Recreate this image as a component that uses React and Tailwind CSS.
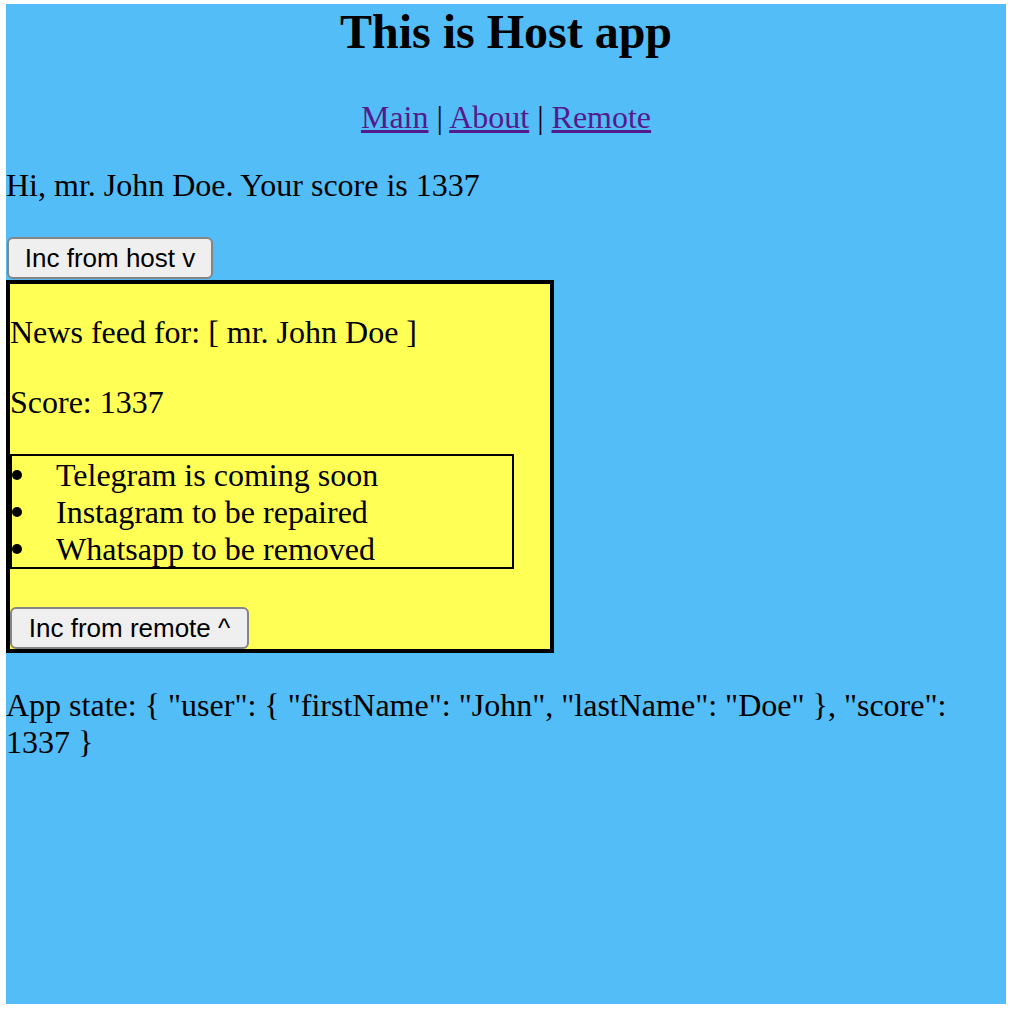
import React from 'react';

// host page mock — sizes are the 2x screenshot pixels
const serif = "font-['Liberation_Serif',_'Times_New_Roman',_serif]";
const btn =
  "h-[42px] rounded-[6px] border-2 border-[#858585] bg-[#efefef] text-[26px] text-black font-['Liberation_Sans',_Arial,_sans-serif] leading-none";

const news = ['Telegram is coming soon', 'Instagram to be repaired', 'Whatsapp to be removed'];

const state = { user: { firstName: 'John', lastName: 'Doe' }, score: 1337 };
const stateText = JSON.stringify(state, null, 1).replace(/\n\s*/g, ' ');

const NewsFeed = () => (
  <div className="w-[548px] border-4 border-black bg-[#ffff55]">
    <p className="mt-[30px] leading-[37px]">News feed for: [ mr. John Doe ]</p>
    <p className="mt-[33px] leading-[37px]">Score: 1337</p>
    <ul className="mt-[33px] w-[504px] border-2 border-black">
      {news.map((item) => (
        <li key={item} className="flex items-center h-[37px]">
          <span className="w-[10px] h-[10px] rounded-full bg-black inline-block" />
          <span className="ml-[34px]">{item}</span>
        </li>
      ))}
    </ul>
    <div className="mt-[38px] h-[42px] flex items-start">
      <button className={`${btn} w-[239px]`}>Inc from remote ^</button>
    </div>
  </div>
);

export default function App() {
  return (
    <div className={`mt-[4px] ml-[6px] w-[1000px] h-[1000px] bg-[#53bdf8] text-black text-[32px] ${serif}`}>
      <h1 className="m-0 text-[48px] font-bold text-center leading-[55px]">This is Host app</h1>

      <p className="mt-[40px] text-center leading-[37px]">
        <a href="#" className="text-[#551a8b] underline">Main</a> |{' '}
        <a href="#" className="text-[#551a8b] underline">About</a> |{' '}
        <a href="#" className="text-[#551a8b] underline">Remote</a>
      </p>

      <p className="mt-[31px] leading-[37px]">Hi, mr. John Doe. Your score is 1337</p>

      <div className="h-[43px] mt-[33px] pl-[1px] flex items-start">
        <button className={`${btn} w-[206px]`}>Inc from host v</button>
      </div>

      <NewsFeed />

      <p className="mt-[34px] leading-[37px]">App state: {stateText}</p>
    </div>
  );
}
